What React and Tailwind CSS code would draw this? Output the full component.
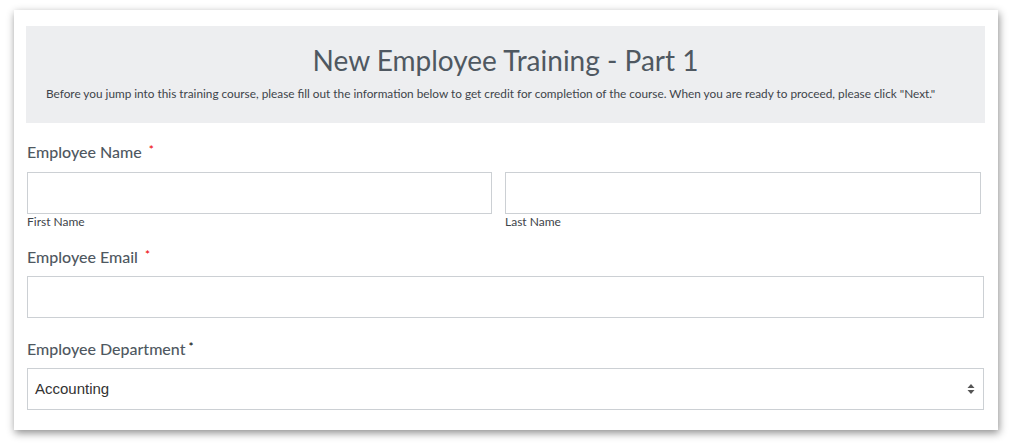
export default function App() {
  return (
    <div className="w-[1012px] h-[447px] bg-white pt-[10px] pl-[14px]" style={{ fontFamily: "Lato, 'Open Sans', sans-serif" }}>
      <div className="w-[984px] h-[420px] bg-white shadow-[1px_3px_8px_rgba(0,0,0,0.45)] pt-[16px] px-[12px]">
        <div className="w-[959px] h-[97px] bg-[#edeef0] flex flex-col items-center pt-[16px]">
          <h1 className="text-[28px] leading-[36px] text-[#4f5861] font-normal">New Employee Training - Part 1</h1>
          <p className="text-[11.8px] leading-[16px] text-[#3e444a] mt-[8px] self-start pl-[20px]">
            Before you jump into this training course, please fill out the information below to get credit for completion of the course. When you are ready to proceed, please click "Next."
          </p>
        </div>
        <div className="px-[1px]">
          <label className="flex items-start mt-[18px] text-[16px] leading-[22px] font-medium text-[#4f5861]">
            Employee Name <span className="text-[#e00] text-[12px] ml-[7px] leading-[18px]">*</span>
          </label>
          <div className="flex gap-[13px] mt-[9px]">
            <div className="w-[465px]">
              <div className="h-[42px] border border-[#ccd0d4] bg-white"></div>
              <div className="text-[12px] leading-[16px] text-[#3e444a] mt-[0px]">First Name</div>
            </div>
            <div className="w-[476px]">
              <div className="h-[42px] border border-[#ccd0d4] bg-white"></div>
              <div className="text-[12px] leading-[16px] text-[#3e444a] mt-[0px]">Last Name</div>
            </div>
          </div>
          <label className="flex items-start mt-[16px] text-[16px] leading-[22px] font-medium text-[#4f5861]">
            Employee Email <span className="text-[#e00] text-[12px] ml-[7px] leading-[18px]">*</span>
          </label>
          <div className="mt-[8px] h-[42px] w-[957px] border border-[#ccd0d4] bg-white"></div>
          <label className="flex items-start mt-[20px] text-[16px] leading-[22px] font-medium text-[#4f5861]">
            Employee Department <span className="text-black text-[12px] ml-[3px] leading-[18px]">*</span>
          </label>
          <div className="mt-[8px] h-[42px] w-[957px] border border-[#ccd0d4] bg-white flex items-center justify-between pl-[7px] pr-[8px]">
            <span className="text-[15px] text-[#333]" style={{ fontFamily: "'Liberation Sans', Arial, sans-serif" }}>Accounting</span>
            <svg width="8" height="12" viewBox="0 0 8 12">
              <path d="M4 1 L7.5 5 H0.5 Z" fill="#555" />
              <path d="M4 11 L7.5 7 H0.5 Z" fill="#555" />
            </svg>
          </div>
        </div>
      </div>
    </div>
  );
}
